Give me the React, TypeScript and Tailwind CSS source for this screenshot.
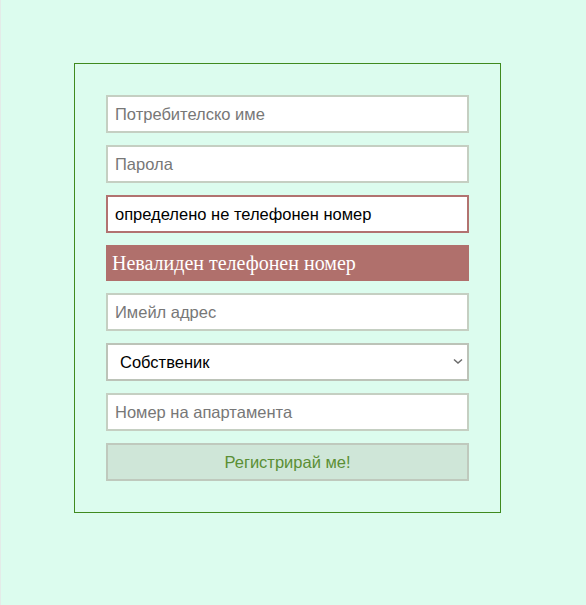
import { useState } from "react";

const inputCls =
  "w-full h-[38px] border-2 border-[#c5cfc2] bg-white px-[7px] text-[16.5px] text-black placeholder:text-[#777777] outline-none";

export default function App() {
  const [phone, setPhone] = useState("определено не телефонен номер");

  return (
    <div
      className="min-h-[605px] bg-[#dcfcee] border-l border-[#e4ebe8] pt-[63px] pl-[73px]"
      style={{ fontFamily: '"Liberation Sans", Arial, sans-serif' }}
    >
      <form
        className="w-[427px] h-[450px] border border-[#3f8a1f] p-[31px] flex flex-col gap-[12px]"
        onSubmit={(e) => e.preventDefault()}
      >
        <input className={inputCls} placeholder="Потребителско име" />
        <input className={inputCls} type="password" placeholder="Парола" />
        <input
          className="w-full h-[38px] border-2 border-[#b27370] bg-white px-[7px] text-[16.5px] text-black outline-none"
          value={phone}
          onChange={(e) => setPhone(e.target.value)}
        />
        <div
          className="h-[36px] bg-[#b0706c] text-white text-[20px] pl-[6px] flex items-center"
          style={{ fontFamily: '"Liberation Serif", "Times New Roman", serif' }}
        >
          Невалиден телефонен номер
        </div>
        <input className={inputCls} placeholder="Имейл адрес" />
        <div className="relative">
          <select className="appearance-none w-full h-[38px] border-2 border-[#bcc3b8] bg-white pl-[12px] pr-[24px] text-[16.5px] text-black outline-none">
            <option>Собственик</option>
            <option>Наемател</option>
          </select>
          <svg
            className="absolute right-[6px] top-[15px] pointer-events-none"
            width="10"
            height="7"
            viewBox="0 0 10 7"
          >
            <path d="M1 1.5 L5 5 L9 1.5" fill="none" stroke="#6b6b6b" strokeWidth="1.5" />
          </svg>
        </div>
        <input className={inputCls} placeholder="Номер на апартамента" />
        <button
          type="submit"
          className="w-full h-[38px] border-2 border-[#bfc9bd] bg-[#cfe6d8] text-[16.5px] text-[#5b8f35]"
        >
          Регистрирай ме!
        </button>
      </form>
    </div>
  );
}
